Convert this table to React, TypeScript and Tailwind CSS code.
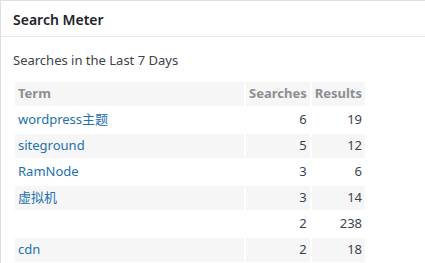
const rows = [
  { term: "wordpress主题", searches: 6, results: 19 },
  { term: "siteground", searches: 5, results: 12 },
  { term: "RamNode", searches: 3, results: 6 },
  { term: "虚拟机", searches: 3, results: 14 },
  { term: "", searches: 2, results: 238 },
  { term: "cdn", searches: 2, results: 18 },
];

export default function App() {
  return (
    <div
      className="h-[263px] w-[425px] overflow-hidden bg-white"
      style={{ fontFamily: '"Segoe UI", "Noto Sans", "Noto Sans CJK SC", sans-serif' }}
    >
      <div className="h-full border-t border-l border-[#e0e0e0]">
        <div className="flex h-[36px] items-center border-b border-[#e8e8e8] px-[12px] pt-[2px]">
          <h2 className="text-[14px] font-semibold text-[#1d2327]">Search Meter</h2>
        </div>

        <div className="px-[12px] pt-[14px]">
          <h3 className="mb-[11px] text-[13px] leading-[18px] text-[#3c434a]">
            Searches in the Last 7 Days
          </h3>
          <table className="table-fixed border-separate border-spacing-[2px] text-[13px] text-[#3c434a]">
            <thead>
              <tr className="h-[24px]">
                <th className="w-[229px] bg-[#f6f6f6] px-[3px] text-left font-bold text-[#8c8f94]">Term</th>
                <th className="w-[63px] bg-[#f6f6f6] px-[3px] text-right font-bold text-[#8c8f94]">Searches</th>
                <th className="w-[53px] bg-[#f6f6f6] px-[3px] text-right font-bold text-[#8c8f94]">Results</th>
              </tr>
            </thead>
            <tbody>
              {rows.map((r, i) => (
                <tr key={i} className="h-[24px]">
                  <td className={`px-[3px] text-[#2271b1] ${i % 2 ? "bg-[#f6f6f6]" : ""}`}>{r.term}</td>
                  <td className={`px-[3px] text-right ${i % 2 ? "bg-[#f6f6f6]" : ""}`}>{r.searches}</td>
                  <td className={`px-[3px] text-right ${i % 2 ? "bg-[#f6f6f6]" : ""}`}>{r.results}</td>
                </tr>
              ))}
            </tbody>
          </table>
        </div>
      </div>
    </div>
  );
}
